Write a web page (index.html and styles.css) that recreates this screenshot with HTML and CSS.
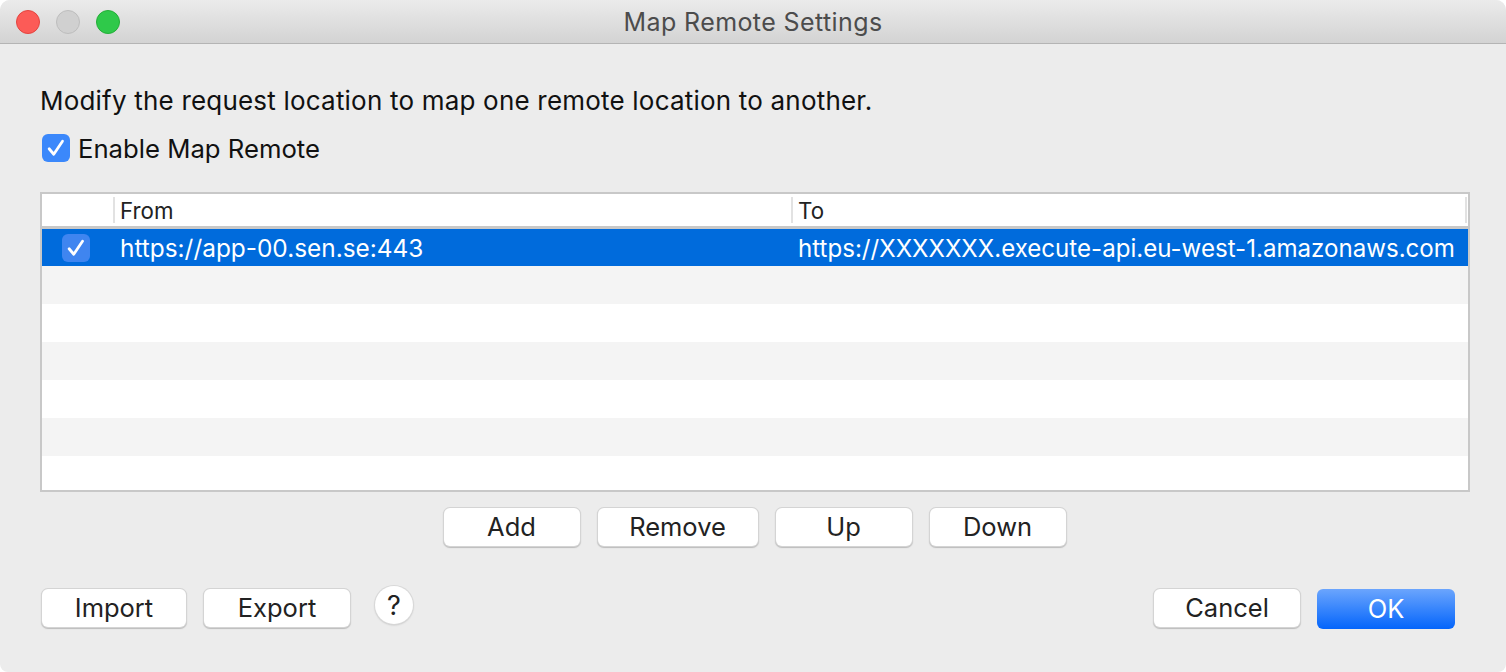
FILE: index.html
```html
<!DOCTYPE html>
<html lang="en">
<head>
  <meta charset="UTF-8">
  <title>Map Remote Settings</title>
  <link rel="stylesheet" href="styles.css">
</head>
<body>
  <div class="window">
    <div class="titlebar">
      <div class="lights">
        <span class="light light-close"></span>
        <span class="light light-min"></span>
        <span class="light light-max"></span>
      </div>
      <div class="window-title">Map Remote Settings</div>
    </div>

    <div class="content">
      <div class="intro">Modify the request location to map one remote location to another.</div>

      <div class="enable-row">
        <span class="checkbox">
          <svg width="20" height="20" viewBox="0 0 16 16"><path d="M2.5 8.6 L6.2 13 L13.2 2.6" fill="none" stroke="#fff" stroke-width="2.2" stroke-linecap="round" stroke-linejoin="round"/></svg>
        </span>
        <span class="enable-label">Enable Map Remote</span>
      </div>

      <div class="table">
        <div class="table-head">
          <div class="col-check"></div>
          <div class="col-from head-cell">From</div>
          <div class="col-to head-cell">To</div>
        </div>
        <div class="row row-selected">
          <div class="col-check">
            <span class="checkbox checkbox-row">
              <svg width="20" height="20" viewBox="0 0 16 16"><path d="M2.5 8.6 L6.2 13 L13.2 2.6" fill="none" stroke="#fff" stroke-width="2.2" stroke-linecap="round" stroke-linejoin="round"/></svg>
            </span>
          </div>
          <div class="col-from cell">https://app-00.sen.se:443</div>
          <div class="col-to cell">https://XXXXXXX.execute-api.eu-west-1.amazonaws.com</div>
        </div>
        <div class="row row-alt"></div>
        <div class="row"></div>
        <div class="row row-alt"></div>
        <div class="row"></div>
        <div class="row row-alt"></div>
        <div class="row row-last"></div>
      </div>

      <div class="table-actions">
        <button class="btn btn-add">Add</button>
        <button class="btn btn-remove">Remove</button>
        <button class="btn btn-up">Up</button>
        <button class="btn btn-down">Down</button>
      </div>

      <div class="footer">
        <div class="footer-left">
          <button class="btn btn-import">Import</button>
          <button class="btn btn-export">Export</button>
          <button class="help">?</button>
        </div>
        <div class="footer-right">
          <button class="btn btn-cancel">Cancel</button>
          <button class="btn btn-ok">OK</button>
        </div>
      </div>
    </div>
  </div>
</body>
</html>
```

FILE: styles.css
```css
html, body {
  margin: 0;
  height: 100%;
  background: #fff;
}

body {
  font-family: Inter, "Liberation Sans", sans-serif;
  color: #1c1c1c;
  overflow: hidden;
}

.window {
  height: 672px;
  display: flex;
  flex-direction: column;
  background: #ececec;
  border-radius: 10px 10px 8px 8px;
  overflow: hidden;
}

.titlebar {
  height: 43px;
  flex: none;
  display: flex;
  align-items: center;
  justify-content: center;
  position: relative;
  background: linear-gradient(#ebebeb, #d3d3d3);
  border-bottom: 1px solid #b4b4b4;
}

.lights {
  position: absolute;
  left: 16px;
  top: 10px;
  display: flex;
  gap: 16px;
}

.light {
  width: 22px;
  height: 22px;
  border-radius: 50%;
  border: 1px solid;
}

.light-close {
  background: #fc5b57;
  border-color: #e3443f;
}

.light-min {
  background: #d0d0d0;
  border-color: #bdbdbd;
}

.light-max {
  background: #2fc94a;
  border-color: #24ae38;
}

.window-title {
  font-size: 25px;
  letter-spacing: 0.4px;
  color: #4c4c4c;
  padding-top: 1px;
}

.content {
  flex: 1;
  padding: 0 36px 0 40px;
}

.intro {
  margin-top: 40px;
  height: 34px;
  line-height: 34px;
  font-size: 26px;
  letter-spacing: 0.2px;
  white-space: nowrap;
  color: #111;
}

.enable-row {
  display: flex;
  align-items: center;
  gap: 8px;
  margin: 16px 0 0 2px;
  height: 28px;
}

.enable-label {
  font-size: 25.7px;
  color: #111;
}

.checkbox {
  width: 28px;
  height: 28px;
  flex: none;
  display: flex;
  align-items: center;
  justify-content: center;
  border-radius: 6px;
  background: #3b88fb;
}

.checkbox-row {
  background: #3f85f0;
}

.table {
  margin-top: 30px;
  width: 1426px;
  border: 2px solid #c8c8c8;
  background: #fff;
}

.table-head {
  height: 32px;
  display: flex;
  align-items: center;
  border-bottom: 3px solid #c8c8c8;
}

.row {
  height: 38px;
  display: flex;
  align-items: center;
}

.row-alt {
  background: #f4f4f4;
}

.row-last {
  height: 34px;
}

.row-selected {
  height: 37px;
  background: #006bdc;
  color: #fff;
}

.col-check {
  width: 71px;
  flex: none;
  display: flex;
  justify-content: center;
  padding-left: 0;
}

.row-selected .col-check {
  justify-content: flex-start;
  padding-left: 20px;
  width: 51px;
}

.col-from {
  width: 678px;
  flex: none;
  box-sizing: border-box;
}

.col-to {
  flex: 1;
  box-sizing: border-box;
}

.head-cell {
  height: 26px;
  line-height: 27px;
  padding-left: 5px;
  border-left: 2px solid #e2e2e2;
  font-size: 22.3px;
  color: #222;
}

.head-cell.col-to {
  border-right: 2px solid #e2e2e2;
  margin-right: 1px;
}

.cell {
  font-size: 24.1px;
  padding-left: 7px;
  padding-top: 1px;
  white-space: nowrap;
}

.cell.col-from {
  font-size: 24.4px;
}

.table-actions {
  display: flex;
  justify-content: center;
  gap: 18px;
  margin: 16px 0 0 -1px;
}

.btn {
  height: 38px;
  padding: 0 0 2px;
  border: none;
  border-radius: 6px;
  background: #fff;
  color: #222;
  font-family: inherit;
  font-size: 25.5px;
  box-shadow: 0 0 0 1px #d4d4d4, 0 1px 1px 1px #bcbcbc;
}

.btn-add, .btn-up, .btn-down {
  width: 136px;
}

.btn-remove {
  width: 160px;
}

.footer {
  display: flex;
  justify-content: space-between;
  margin-top: 43px;
  padding: 0 15px 0 2px;
  width: 1413px;
}

.footer-left, .footer-right {
  display: flex;
  gap: 18px;
}

.btn-import {
  width: 144px;
}

.btn-export {
  width: 146px;
}

.btn-cancel {
  width: 146px;
}

.footer-right {
  gap: 17px;
}

.btn-ok {
  width: 138px;
  height: 40px;
  color: #fff;
  background: linear-gradient(#6ba5fd, #0465fb);
  box-shadow: none;
}

.help {
  width: 38px;
  height: 38px;
  margin: -3px 0 0 7px;
  padding: 0;
  border: none;
  border-radius: 50%;
  background: #fff;
  color: #222;
  font-family: inherit;
  font-size: 27px;
  box-shadow: 0 0 0 1px #d8d8d8, 0 1px 2px #b0b0b0;
}
```
